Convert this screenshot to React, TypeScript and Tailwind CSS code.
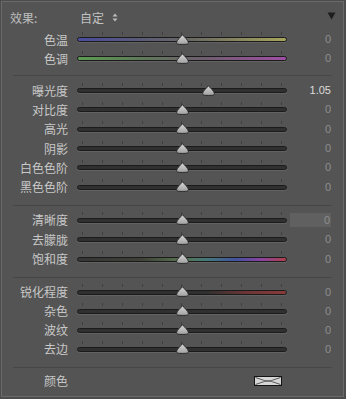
import React from 'react';

type TrackKind = 'gray' | 'temp' | 'tint' | 'sat' | 'sharp';

const trackClass: Record<TrackKind, string> = {
  gray: 'bg-[#303030]',
  temp: 'bg-[linear-gradient(to_right,#4a4c9e,#5a5a78_30%,#6a6a62_55%,#a6a45c)]',
  tint: 'bg-[linear-gradient(to_right,#5c9c52,#5e7a58_30%,#6e5e6e_60%,#a04ea4)]',
  sat: 'bg-[linear-gradient(to_right,#353535,#404038_30%,#56744e_50%,#44787a_62%,#4252a0_76%,#8a42a0_88%,#b0404a)]',
  sharp: 'bg-[linear-gradient(to_right,#303030,#303030_62%,#6a3434_80%,#8a3a3a)]',
};

const Thumb = ({ pos }: { pos: number }) => (
  <svg
    width="13"
    height="11"
    viewBox="0 0 13 11"
    className="absolute top-[calc(50%-6px)]"
    style={{ left: pos * 210 - 6.5 }}
  >
    <defs>
      <linearGradient id="thumbFill" x1="0" y1="0" x2="0" y2="1">
        <stop offset="0" stopColor="#d8d8d8" />
        <stop offset="1" stopColor="#a0a0a0" />
      </linearGradient>
    </defs>
    <path
      d="M6.5 0.6 C7.6 2.4 12.4 6.2 12.4 8.4 C12.4 10.3 10.8 10.4 6.5 10.4 C2.2 10.4 0.6 10.3 0.6 8.4 C0.6 6.2 5.4 2.4 6.5 0.6 Z"
      fill="url(#thumbFill)"
      stroke="#262626"
      strokeWidth="1"
    />
  </svg>
);

const Slider = ({ pos, kind }: { pos: number; kind: TrackKind }) => (
  <div className="relative w-[210px] h-full flex items-center">
    {/* tick marks */}
    <div className="absolute left-[5px] right-[5px] top-[calc(50%-8px)] flex justify-between">
      {Array.from({ length: 11 }).map((_, i) => (
        <div key={i} className="w-px h-[3px] bg-[#3f3f3f]" />
      ))}
    </div>
    <div
      className={`w-full h-[5px] rounded-full border border-[#1b1b1b] shadow-[0_1px_0_#626262] ${trackClass[kind]}`}
    />
    <Thumb pos={pos} />
  </div>
);

interface RowProps {
  label: string;
  value?: string;
  pos?: number;
  kind?: TrackKind;
  boxed?: boolean;
  h?: string;
}

const Row = ({ label, value = '0', pos = 0.5, kind = 'gray', boxed, h = 'h-[19.3px]' }: RowProps) => (
  <div className={`flex items-center ${h}`}>
    <div className="w-[66px] text-right text-[12px] text-[#c8c8c8] leading-none">{label}</div>
    <div className="ml-[9px] h-full">
      <Slider pos={pos} kind={kind} />
    </div>
    <div className="w-[44px] flex justify-end">
      {boxed ? (
        <div className="w-[41px] h-[14px] bg-[#606060] flex items-center justify-end pr-[1px] text-[11px] text-[#8e8e8e] font-['Liberation_Sans',sans-serif]">
          {value}
        </div>
      ) : (
        <div
          className={`text-[11px] leading-none font-['Liberation_Sans',sans-serif] ${
            value === '0' ? 'text-[#8e8e8e]' : 'text-[#dcdcdc]'
          }`}
        >
          {value}
        </div>
      )}
    </div>
  </div>
);

const Divider = ({ mt, mb }: { mt: string; mb: string }) => (
  <div className={`mx-[11px] h-px bg-[#474747] ${mt} ${mb}`} />
);

export default function App() {
  return (
    <div className="w-[346px] h-[399px] bg-[#4c4c4c] pt-px pl-px font-['Noto_Sans_CJK_SC',sans-serif]">
      <div className="w-[343px] h-[396px] bg-[#545454] border border-[#6a6a6a] flex flex-col">
        {/* Header */}
        <div className="h-[28px] pt-[3px] flex items-center">
          <div className="pl-[8px] w-[78px] text-[12px] text-[#bdbdbd]">效果:</div>
          <div className="flex items-center text-[12px] text-[#c2c2c2]">
            自定
            <svg width="6" height="9" viewBox="0 0 6 9" className="ml-[8px]">
              <path d="M3 0.5 L5.5 3.5 L0.5 3.5 Z" fill="#bcbcbc" />
              <path d="M3 8.5 L5.5 5.5 L0.5 5.5 Z" fill="#bcbcbc" />
            </svg>
          </div>
          <div className="ml-auto mr-[7px] -mt-[4px]">
            <svg width="9" height="8" viewBox="0 0 9 8">
              <path d="M0.5 0.5 L8.5 0.5 L4.5 7.5 Z" fill="#1e1e1e" />
            </svg>
          </div>
        </div>

        <Row label="色温" kind="temp" h="h-[19px]" />
        <Row label="色调" kind="tint" h="h-[19px]" />

        <Divider mt="mt-[7px]" mb="mb-[5px]" />

        <Row label="曝光度" value="1.05" pos={0.624} />
        <Row label="对比度" />
        <Row label="高光" />
        <Row label="阴影" />
        <Row label="白色色阶" />
        <Row label="黑色色阶" />

        <Divider mt="mt-[8px]" mb="mb-[5px]" />

        <Row label="清晰度" boxed />
        <Row label="去朦胧" />
        <Row label="饱和度" kind="sat" />

        <Divider mt="mt-[8px]" mb="mb-[5px]" />

        <Row label="锐化程度" kind="sharp" h="h-[19px]" />
        <Row label="杂色" h="h-[19px]" />
        <Row label="波纹" h="h-[19px]" />
        <Row label="去边" h="h-[19px]" />

        <Divider mt="mt-[8px]" mb="mb-0" />

        <div className="h-[26px] flex items-center">
          <div className="w-[66px] text-right text-[12px] text-[#c8c8c8] leading-none">颜色</div>
          <div className="ml-[186px]">
            <svg width="28" height="10" viewBox="0 0 28 10" className="block">
              <rect x="0.5" y="0.5" width="27" height="9" fill="#d6d6d6" stroke="#141414" />
              <path d="M1.5 1.5 C9 4 11 5 14 5 C17 5 19 4 26.5 1.5" stroke="#555" fill="none" strokeWidth="1" />
              <path d="M1.5 8.5 C9 6 11 5 14 5 C17 5 19 6 26.5 8.5" stroke="#555" fill="none" strokeWidth="1" />
            </svg>
          </div>
        </div>
      </div>
    </div>
  );
}
